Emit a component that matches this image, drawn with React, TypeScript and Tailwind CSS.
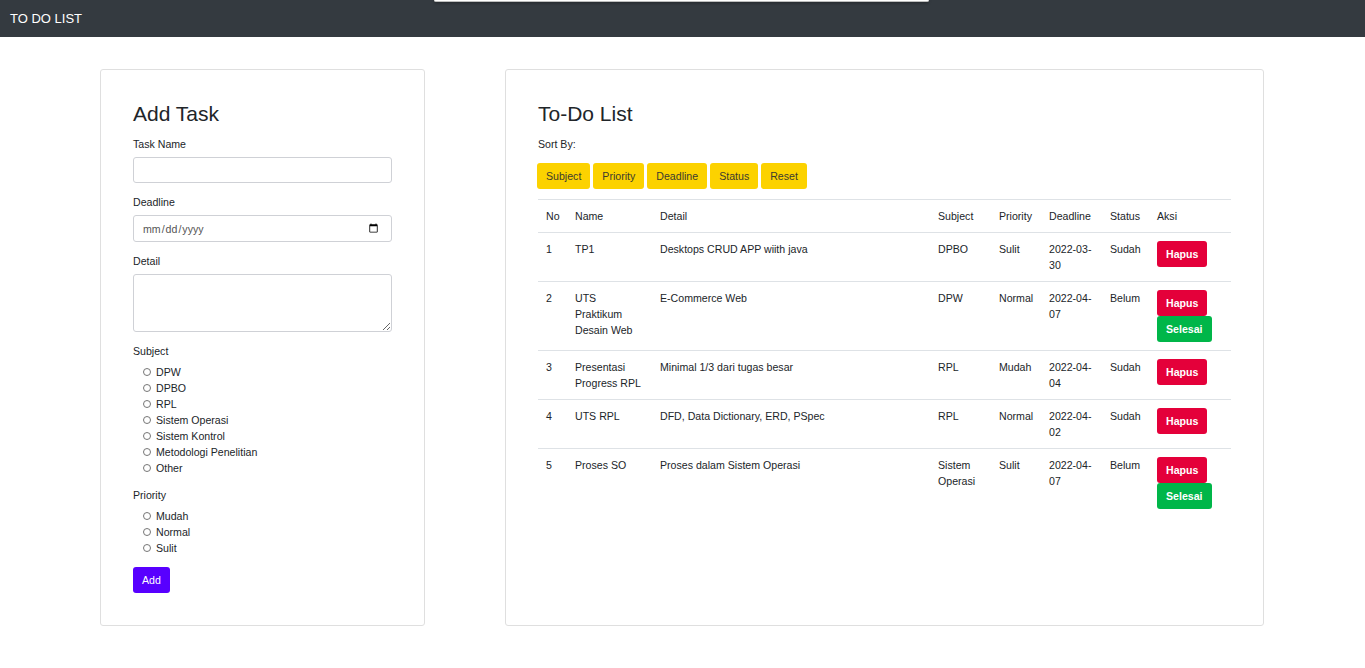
import React from "react";

const SUBJECTS = [
  "DPW",
  "DPBO",
  "RPL",
  "Sistem Operasi",
  "Sistem Kontrol",
  "Metodologi Penelitian",
  "Other",
];

const PRIORITIES = ["Mudah", "Normal", "Sulit"];

const SORT_KEYS = ["Subject", "Priority", "Deadline", "Status", "Reset"];

type Task = {
  no: number;
  name: string;
  detail: string;
  subject: string;
  priority: string;
  deadline: string;
  status: "Sudah" | "Belum";
};

const TASKS: Task[] = [
  { no: 1, name: "TP1", detail: "Desktops CRUD APP wiith java", subject: "DPBO", priority: "Sulit", deadline: "2022-03-30", status: "Sudah" },
  { no: 2, name: "UTS Praktikum Desain Web", detail: "E-Commerce Web", subject: "DPW", priority: "Normal", deadline: "2022-04-07", status: "Belum" },
  { no: 3, name: "Presentasi Progress RPL", detail: "Minimal 1/3 dari tugas besar", subject: "RPL", priority: "Mudah", deadline: "2022-04-04", status: "Sudah" },
  { no: 4, name: "UTS RPL", detail: "DFD, Data Dictionary, ERD, PSpec", subject: "RPL", priority: "Normal", deadline: "2022-04-02", status: "Sudah" },
  { no: 5, name: "Proses SO", detail: "Proses dalam Sistem Operasi", subject: "Sistem Operasi", priority: "Sulit", deadline: "2022-04-07", status: "Belum" },
];

const RadioGroup = ({ name, options }: { name: string; options: string[] }) => (
  <div className="flex flex-col pl-[10px]">
    {options.map((opt) => (
      <label key={opt} className="flex items-center h-[16px] gap-[5px]">
        <input
          type="radio"
          name={name}
          className="appearance-none w-[8px] h-[8px] rounded-full border border-[#767676] bg-white"
        />
        <span>{opt}</span>
      </label>
    ))}
  </div>
);

const AddTaskForm = () => (
  <div className="w-[325px] border border-[#dfdfdf] rounded-[3px] bg-white px-[32px] pt-[31px] pb-[32px]">
    <h2 className="text-[21px] leading-[25px] mb-[10px]">Add Task</h2>

    <div className="mb-[11px]">
      <label className="block mb-[5px]">Task Name</label>
      <input type="text" className="w-full h-[26px] border border-[#cfd1d6] rounded-[3px] px-[8px] outline-none" />
    </div>

    <div className="mb-[11px]">
      <label className="block mb-[5px]">Deadline</label>
      <input
        type="date"
        className="w-full h-[27px] border border-[#cfd1d6] rounded-[3px] pl-[8px] pr-[10px] text-[#555] outline-none"
      />
    </div>

    <div className="mb-[11px]">
      <label className="block mb-[5px]">Detail</label>
      <textarea className="block w-full h-[58px] border border-[#cfd1d6] rounded-[3px] px-[8px] outline-none" />
    </div>

    <div className="mb-[11px]">
      <label className="block mb-[5px]">Subject</label>
      <RadioGroup name="subject" options={SUBJECTS} />
    </div>

    <div className="mb-[11px]">
      <label className="block mb-[5px]">Priority</label>
      <RadioGroup name="priority" options={PRIORITIES} />
    </div>

    <button className="h-[26px] px-[9px] rounded-[3px] bg-[#5800ff] text-white">Add</button>
  </div>
);

const TodoTable = () => (
  <div className="flex-1 border border-[#dfdfdf] rounded-[3px] bg-white px-[32px] pt-[31px] pb-[32px]">
    <h2 className="text-[21px] leading-[25px] mb-[10px]">To-Do List</h2>
    <p className="mb-[11px]">Sort By:</p>

    <div className="flex gap-[3px] mb-[10px] -ml-[1px]">
      {SORT_KEYS.map((key) => (
        <button key={key} className="h-[26px] px-[9px] rounded-[3px] bg-[#fcd200] text-[#3b3b2f]">
          {key}
        </button>
      ))}
    </div>

    <table className="w-full table-fixed border-collapse border-t border-[#dee2e6] text-left">
      <thead>
        <tr className="border-b border-[#dee2e6]">
          <th className="w-[29px] px-[8px] py-[8px] font-normal">No</th>
          <th className="w-[85px] px-[8px] py-[8px] font-normal">Name</th>
          <th className="w-[278px] px-[8px] py-[8px] font-normal">Detail</th>
          <th className="w-[61px] px-[8px] py-[8px] font-normal">Subject</th>
          <th className="w-[50px] px-[8px] py-[8px] font-normal">Priority</th>
          <th className="w-[61px] px-[8px] py-[8px] font-normal">Deadline</th>
          <th className="w-[47px] px-[8px] py-[8px] font-normal">Status</th>
          <th className="px-[8px] py-[8px] font-normal">Aksi</th>
        </tr>
      </thead>
      <tbody>
        {TASKS.map((t, i) => (
          <tr key={t.no} className={i < TASKS.length - 1 ? "border-b border-[#dee2e6] align-top" : "align-top"}>
            <td className="px-[8px] py-[8px]">{t.no}</td>
            <td className="px-[8px] py-[8px]">{t.name}</td>
            <td className="px-[8px] py-[8px]">{t.detail}</td>
            <td className="px-[8px] py-[8px]">{t.subject}</td>
            <td className="px-[8px] py-[8px]">{t.priority}</td>
            <td className="px-[8px] py-[8px] break-words">{t.deadline}</td>
            <td className="px-[8px] py-[8px]">{t.status}</td>
            <td className="px-[8px] py-[8px]">
              <div className="flex flex-col items-start">
                <button className="h-[26px] px-[9px] rounded-[3px] bg-[#e4003a] text-white font-bold">Hapus</button>
                {t.status === "Belum" && (
                  <button className="h-[26px] px-[9px] rounded-[3px] bg-[#00b649] text-white font-bold">Selesai</button>
                )}
              </div>
            </td>
          </tr>
        ))}
      </tbody>
    </table>
  </div>
);

export default function App() {
  return (
    <div className="relative min-h-[668px] bg-white text-[#212529] text-[10.6px] leading-[16px] font-['Liberation_Sans',Arial,sans-serif]">
      <nav className="h-[37px] bg-[#343a40] flex items-center px-[10px]">
        <span className="text-white text-[13px]">TO DO LIST</span>
      </nav>

      <div className="absolute top-0 left-[434px] w-[495px] h-[2px] bg-white border-b border-[#bdbdbd] shadow-[0_1px_3px_rgba(0,0,0,0.4)] rounded-b-[2px]" />

      <main className="flex items-stretch gap-[80px] pl-[100px] pr-[101px] pt-[32px]">
        <AddTaskForm />
        <TodoTable />
      </main>
    </div>
  );
}
